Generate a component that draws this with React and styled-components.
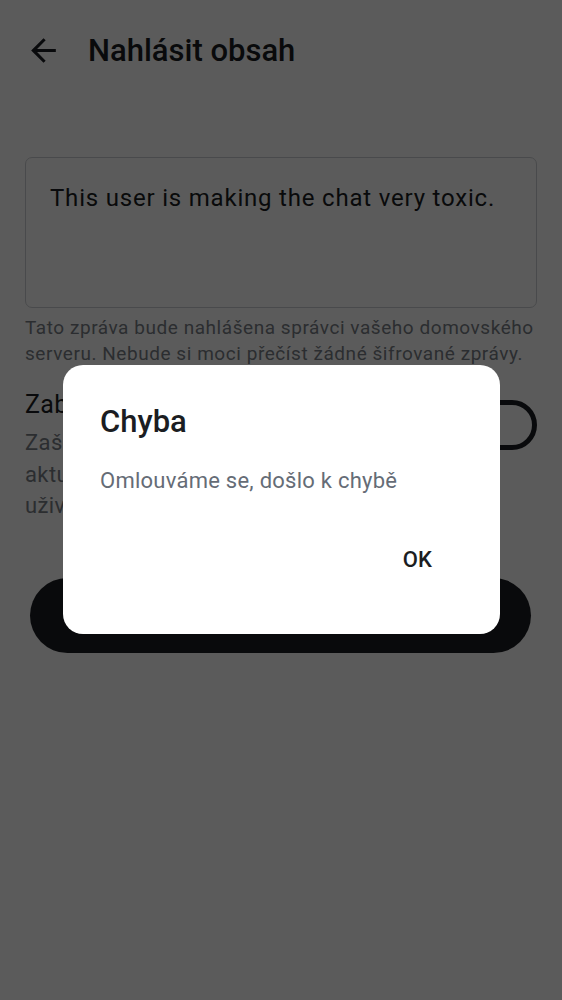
import React from 'react';
import styled, { createGlobalStyle } from 'styled-components';

const GlobalStyle = createGlobalStyle`
  html, body {
    margin: 0;
    padding: 0;
    background: #ffffff;
    font-family: Roboto, "Noto Sans", sans-serif;
  }
  * { box-sizing: border-box; }
`;

const Screen = styled.div`
  width: 562px;
  min-height: 1000px;
  background: #ffffff;
  color: #1b1d22;
`;

const TopBar = styled.header`
  height: 100px;
  display: flex;
  align-items: center;
  padding-left: 25px;
`;

const BackButton = styled.button`
  width: 37px;
  height: 37px;
  padding: 0;
  border: none;
  background: none;
  display: flex;
  align-items: center;
  justify-content: center;
  color: #1b1d22;
`;

const Title = styled.h1`
  margin: 0 0 0 26px;
  font-size: 31px;
  font-weight: 500;
  letter-spacing: 0;
  color: #1b1d22;
`;

const Content = styled.main`
  padding: 57px 25px 0;
  display: flex;
  flex-direction: column;
`;

const TextField = styled.div`
  height: 151px;
  border: 1.5px solid #cdd0d4;
  border-radius: 7px;
  padding: 23px 24px;
  font-size: 24px;
  line-height: 35px;
  letter-spacing: 0.8px;
  color: #1b1d22;
`;

const Hint = styled.p`
  margin: 7px 0 0;
  font-size: 19px;
  line-height: 26px;
  letter-spacing: 0.55px;
  color: #7a7f87;
`;

const BlockRow = styled.div`
  margin-top: 19px;
  display: flex;
  align-items: flex-start;
  gap: 24px;
`;

const BlockText = styled.div`
  flex: 1;
`;

const BlockTitle = styled.div`
  font-size: 25px;
  line-height: 37px;
  letter-spacing: 0.3px;
  color: #1b1d22;
`;

const BlockDesc = styled.div`
  margin-top: 4px;
  font-size: 22px;
  line-height: 31.5px;
  letter-spacing: 0.4px;
  color: #7a7f87;
`;

const SwitchTrack = styled.div`
  flex: none;
  width: 81px;
  height: 50px;
  margin-top: 14px;
  border: 5px solid #1b1d22;
  border-radius: 25px;
  display: flex;
  align-items: center;
  padding-left: 8px;
`;

const SwitchThumb = styled.div`
  width: 24px;
  height: 24px;
  border-radius: 50%;
  background: #1b1d22;
`;

const SubmitButton = styled.button`
  margin: 56px 6px 0 5px;
  height: 75px;
  border: none;
  border-radius: 38px;
  background: #1b1d22;
  color: #ffffff;
  font-family: Roboto, sans-serif;
  font-size: 25px;
  font-weight: 500;
`;

const Scrim = styled.div`
  position: fixed;
  inset: 0;
  background: rgba(0, 0, 0, 0.643);
  display: flex;
  align-items: center;
  justify-content: center;
`;

const Dialog = styled.div`
  width: 437px;
  background: #ffffff;
  border-radius: 20px;
  padding: 37px 37px 37px;
  margin-left: 1px;
  margin-top: -1px;
`;

const DialogTitle = styled.h2`
  margin: 0;
  font-size: 31px;
  line-height: 40px;
  font-weight: 500;
  color: #1b1d22;
`;

const DialogBody = styled.p`
  margin: 23px 0 0;
  font-size: 22px;
  line-height: 31px;
  letter-spacing: 0.25px;
  color: #656c76;
`;

const Actions = styled.div`
  margin-top: 26px;
  display: flex;
  justify-content: flex-end;
`;

const TextButton = styled.button`
  height: 75px;
  padding: 0 31px;
  border: none;
  background: none;
  font-family: Roboto, sans-serif;
  font-size: 22px;
  font-weight: 500;
  letter-spacing: 0.15px;
  color: #1b1d22;
`;

const BackArrow = () => (
  <svg width="37" height="37" viewBox="0 0 24 24" fill="currentColor">
    <path d="M20 11H7.83l5.59-5.59L12 4l-8 8 8 8 1.41-1.41L7.83 13H20v-2z" />
  </svg>
);

export default function App() {
  return (
    <>
      <GlobalStyle />
      <Screen>
        <TopBar>
          <BackButton aria-label="Zpět">
            <BackArrow />
          </BackButton>
          <Title>Nahlásit obsah</Title>
        </TopBar>
        <Content>
          <TextField>This user is making the chat very toxic.</TextField>
          <Hint>
            Tato zpráva bude nahlášena správci vašeho domovského serveru. Nebude si moci přečíst žádné šifrované zprávy.
          </Hint>
          <BlockRow>
            <BlockText>
              <BlockTitle>Zablokovat uživatele</BlockTitle>
              <BlockDesc>
                Zaškrtněte, pokud chcete skrýt všechny<br />
                aktuální a budoucí zprávy od tohoto<br />
                uživatele
              </BlockDesc>
            </BlockText>
            <SwitchTrack>
              <SwitchThumb />
            </SwitchTrack>
          </BlockRow>
          <SubmitButton>Nahlásit</SubmitButton>
        </Content>
        <Scrim>
          <Dialog role="alertdialog">
            <DialogTitle>Chyba</DialogTitle>
            <DialogBody>Omlouváme se, došlo k chybě</DialogBody>
            <Actions>
              <TextButton>OK</TextButton>
            </Actions>
          </Dialog>
        </Scrim>
      </Screen>
    </>
  );
}
